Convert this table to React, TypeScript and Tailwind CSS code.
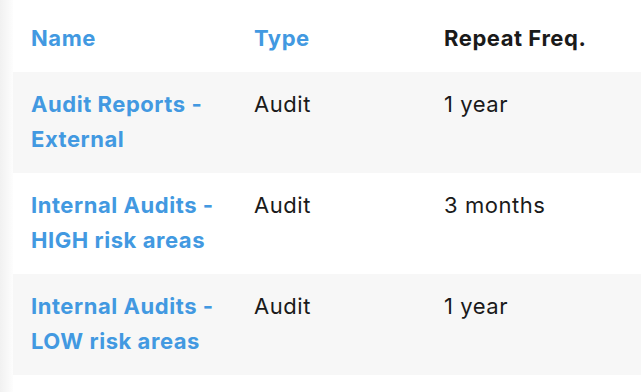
import React from "react";

type Schedule = {
  name: string[];
  type: string;
  freq: string;
};

const rows: Schedule[] = [
  { name: ["Audit Reports -", "External"], type: "Audit", freq: "1 year" },
  { name: ["Internal Audits -", "HIGH risk areas"], type: "Audit", freq: "3 months" },
  { name: ["Internal Audits -", "LOW risk areas"], type: "Audit", freq: "1 year" },
];

export default function App(): JSX.Element {
  return (
    <div
      className="flex h-[392px] w-full overflow-hidden bg-white"
      style={{ fontFamily: "Inter, 'Noto Sans', sans-serif" }}
    >
      {/* faint edge shade on the left */}
      <div className="w-[13px] shrink-0 bg-gradient-to-r from-[#f1f1f1] to-[#fdfdfd]" />

      <table className="w-full table-fixed border-collapse self-start text-[22px] leading-[35px] tracking-[0.025em] text-[#1a1a1a]">
        <colgroup>
          <col className="w-[221px]" />
          <col className="w-[190px]" />
          <col />
        </colgroup>
        <thead>
          <tr>
            <th className="pl-[18px] pr-4 pt-[21px] pb-[16px] text-left font-bold text-[#4299e1]">Name</th>
            <th className="pl-[20px] pr-4 pt-[21px] pb-[16px] text-left font-bold text-[#4299e1]">Type</th>
            <th className="pl-[20px] pr-4 pt-[21px] pb-[16px] text-left font-bold">Repeat Freq.</th>
          </tr>
        </thead>
        <tbody>
          {rows.map((row, i) => (
            <tr key={i} className={i % 2 === 0 ? "bg-[#f7f7f7]" : "bg-white"}>
              <td className="pl-[18px] pr-2 pt-[15px] pb-[16px] align-top font-bold text-[#4299e1]">
                {row.name[0]}
                <br />
                {row.name[1]}
              </td>
              <td className="pl-[20px] pr-4 pt-[15px] pb-[16px] align-top">{row.type}</td>
              <td className="pl-[20px] pr-4 pt-[15px] pb-[16px] align-top">{row.freq}</td>
            </tr>
          ))}
        </tbody>
      </table>
    </div>
  );
}
